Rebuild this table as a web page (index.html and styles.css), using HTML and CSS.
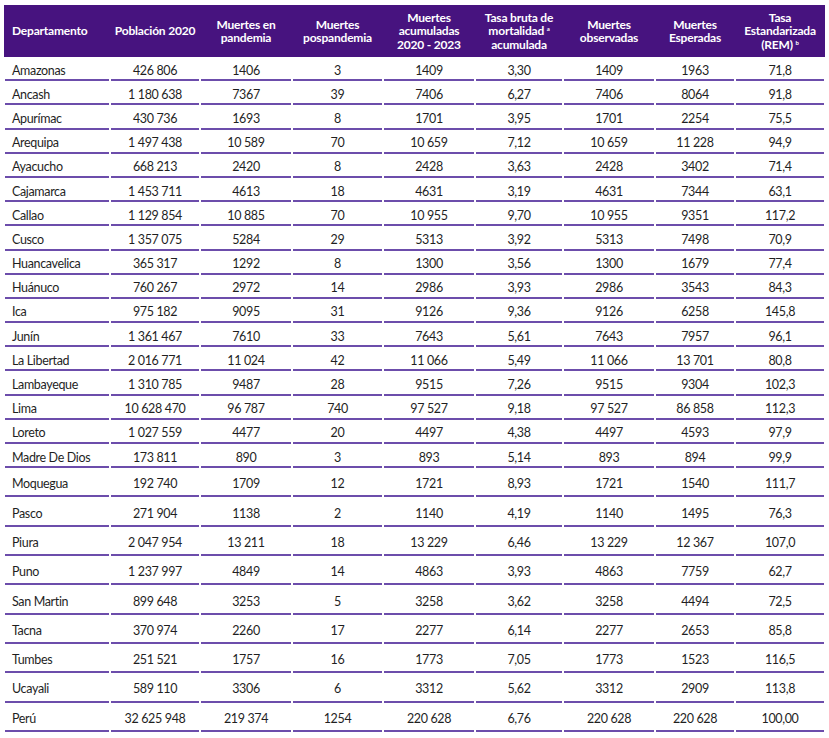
FILE: index.html
```html
<!DOCTYPE html>
<html lang="es">
<head>
<meta charset="utf-8">
<title>Tabla mortalidad</title>
<link rel="stylesheet" href="styles.css">
</head>
<body>
<table class="tbl">
  <colgroup>
    <col class="c1"><col class="c2"><col class="c3"><col class="c4"><col class="c5"><col class="c6"><col class="c7"><col class="c8"><col class="c9">
  </colgroup>
  <thead>
    <tr>
      <th class="left">Departamento</th>
      <th>Población 2020</th>
      <th>Muertes en<br>pandemia</th>
      <th>Muertes<br>pospandemia</th>
      <th>Muertes<br>acumuladas<br>2020 - 2023</th>
      <th>Tasa bruta de<br>mortalidad <sup>a</sup><br>acumulada</th>
      <th>Muertes<br>observadas</th>
      <th>Muertes<br>Esperadas</th>
      <th>Tasa<br>Estandarizada<br>(REM) <sup>b</sup></th>
    </tr>
  </thead>
  <tbody>
    <tr class="r"><td>Amazonas</td><td>426 806</td><td>1406</td><td>3</td><td>1409</td><td>3,30</td><td>1409</td><td>1963</td><td>71,8</td></tr>
    <tr class="r"><td>Ancash</td><td>1 180 638</td><td>7367</td><td>39</td><td>7406</td><td>6,27</td><td>7406</td><td>8064</td><td>91,8</td></tr>
    <tr class="r"><td>Apurímac</td><td>430 736</td><td>1693</td><td>8</td><td>1701</td><td>3,95</td><td>1701</td><td>2254</td><td>75,5</td></tr>
    <tr class="r"><td>Arequipa</td><td>1 497 438</td><td>10 589</td><td>70</td><td>10 659</td><td>7,12</td><td>10 659</td><td>11 228</td><td>94,9</td></tr>
    <tr class="r"><td>Ayacucho</td><td>668 213</td><td>2420</td><td>8</td><td>2428</td><td>3,63</td><td>2428</td><td>3402</td><td>71,4</td></tr>
    <tr class="r"><td>Cajamarca</td><td>1 453 711</td><td>4613</td><td>18</td><td>4631</td><td>3,19</td><td>4631</td><td>7344</td><td>63,1</td></tr>
    <tr class="r"><td>Callao</td><td>1 129 854</td><td>10 885</td><td>70</td><td>10 955</td><td>9,70</td><td>10 955</td><td>9351</td><td>117,2</td></tr>
    <tr class="r"><td>Cusco</td><td>1 357 075</td><td>5284</td><td>29</td><td>5313</td><td>3,92</td><td>5313</td><td>7498</td><td>70,9</td></tr>
    <tr class="r"><td>Huancavelica</td><td>365 317</td><td>1292</td><td>8</td><td>1300</td><td>3,56</td><td>1300</td><td>1679</td><td>77,4</td></tr>
    <tr class="r"><td>Huánuco</td><td>760 267</td><td>2972</td><td>14</td><td>2986</td><td>3,93</td><td>2986</td><td>3543</td><td>84,3</td></tr>
    <tr class="r"><td>Ica</td><td>975 182</td><td>9095</td><td>31</td><td>9126</td><td>9,36</td><td>9126</td><td>6258</td><td>145,8</td></tr>
    <tr class="r"><td>Junín</td><td>1 361 467</td><td>7610</td><td>33</td><td>7643</td><td>5,61</td><td>7643</td><td>7957</td><td>96,1</td></tr>
    <tr class="r"><td>La Libertad</td><td>2 016 771</td><td>11 024</td><td>42</td><td>11 066</td><td>5,49</td><td>11 066</td><td>13 701</td><td>80,8</td></tr>
    <tr class="r"><td>Lambayeque</td><td>1 310 785</td><td>9487</td><td>28</td><td>9515</td><td>7,26</td><td>9515</td><td>9304</td><td>102,3</td></tr>
    <tr class="r"><td>Lima</td><td>10 628 470</td><td>96 787</td><td>740</td><td>97 527</td><td>9,18</td><td>97 527</td><td>86 858</td><td>112,3</td></tr>
    <tr class="r"><td>Loreto</td><td>1 027 559</td><td>4477</td><td>20</td><td>4497</td><td>4,38</td><td>4497</td><td>4593</td><td>97,9</td></tr>
    <tr class="r"><td>Madre De Dios</td><td>173 811</td><td>890</td><td>3</td><td>893</td><td>5,14</td><td>893</td><td>894</td><td>99,9</td></tr>
    <tr class="t"><td>Moquegua</td><td>192 740</td><td>1709</td><td>12</td><td>1721</td><td>8,93</td><td>1721</td><td>1540</td><td>111,7</td></tr>
    <tr class="t"><td>Pasco</td><td>271 904</td><td>1138</td><td>2</td><td>1140</td><td>4,19</td><td>1140</td><td>1495</td><td>76,3</td></tr>
    <tr class="t"><td>Piura</td><td>2 047 954</td><td>13 211</td><td>18</td><td>13 229</td><td>6,46</td><td>13 229</td><td>12 367</td><td>107,0</td></tr>
    <tr class="t"><td>Puno</td><td>1 237 997</td><td>4849</td><td>14</td><td>4863</td><td>3,93</td><td>4863</td><td>7759</td><td>62,7</td></tr>
    <tr class="t"><td>San Martin</td><td>899 648</td><td>3253</td><td>5</td><td>3258</td><td>3,62</td><td>3258</td><td>4494</td><td>72,5</td></tr>
    <tr class="t"><td>Tacna</td><td>370 974</td><td>2260</td><td>17</td><td>2277</td><td>6,14</td><td>2277</td><td>2653</td><td>85,8</td></tr>
    <tr class="t"><td>Tumbes</td><td>251 521</td><td>1757</td><td>16</td><td>1773</td><td>7,05</td><td>1773</td><td>1523</td><td>116,5</td></tr>
    <tr class="t"><td>Ucayali</td><td>589 110</td><td>3306</td><td>6</td><td>3312</td><td>5,62</td><td>3312</td><td>2909</td><td>113,8</td></tr>
    <tr class="t"><td>Perú</td><td>32 625 948</td><td>219 374</td><td>1254</td><td>220 628</td><td>6,76</td><td>220 628</td><td>220 628</td><td>100,00</td></tr>
  </tbody>
</table>
</body>
</html>
```

FILE: styles.css
```css
html, body {
  margin: 0;
  padding: 0;
  background: #ffffff;
}
body {
  padding: 5px 4px 0 4px;
  font-family: Lato, "Open Sans", sans-serif;
  color: #1f1f1f;
}
.tbl {
  border-collapse: collapse;
  table-layout: fixed;
  width: 821px;
}
.c1 { width: 106px; }
.c2 { width: 90px; }
.c3 { width: 92px; }
.c4 { width: 91px; }
.c5 { width: 92px; }
.c6 { width: 88px; }
.c7 { width: 92px; }
.c8 { width: 80px; }
.c9 { width: 90px; }

.tbl th {
  background: #47137f;
  color: #ffffff;
  font-weight: 700;
  font-size: 12px;
  line-height: 13.5px;
  letter-spacing: -0.2px;
  height: 52px;
  padding: 0 1px;
  text-align: center;
  vertical-align: middle;
}
.tbl th.left {
  text-align: left;
  padding-left: 8px;
}
.tbl sup {
  font-size: 6px;
  vertical-align: 4px;
  line-height: 0;
}
.tbl td {
  font-size: 12.5px;
  letter-spacing: -0.35px;
  text-align: center;
  vertical-align: middle;
  padding: 2px 2px 0 2px;
  background-image: linear-gradient(#6c4dab, #6c4dab);
  background-repeat: no-repeat;
  background-position: center bottom;
  background-size: calc(100% - 2px) 2px;
  white-space: nowrap;
}
.tbl td:first-child {
  text-align: left;
  padding-left: 8px;
}
.r td { height: 22.2px; }
.t td { height: 27.3px; }
```
